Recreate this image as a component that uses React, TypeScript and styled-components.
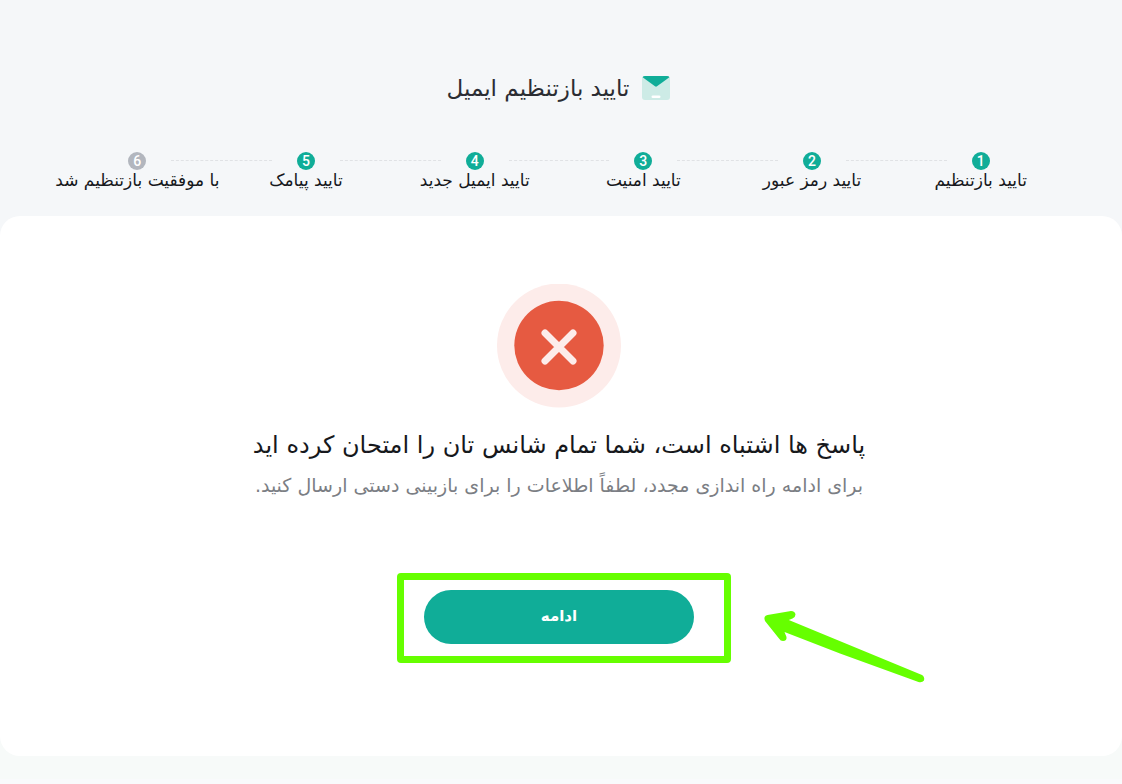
import React from "react";
import styled, { createGlobalStyle } from "styled-components";

const GlobalStyle = createGlobalStyle`
  * { box-sizing: border-box; }
  body {
    margin: 0;
    background: #f5f7f9;
    color: #16181c;
    font-family: "DejaVu Sans", sans-serif;
  }
`;

const Page = styled.main`
  display: flex;
  flex-direction: column;
  min-height: 100vh;
  overflow-x: hidden;
  border-bottom: 5px solid #f9fafc;
  background: linear-gradient(#f5f7f9 40%, #f7faf9 90%);
`;

const Header = styled.header`
  display: flex;
  align-items: center;
  justify-content: center;
  gap: 12px;
  padding: 68px 4px 0 0;
`;

const Title = styled.h1`
  margin: 0;
  font-size: 23px;
  line-height: 40px;
  font-weight: 400;
  color: #2b2d33;
`;

const Steps = styled.ol`
  display: grid;
  grid-template-columns: repeat(6, minmax(0, 1fr));
  margin: 0;
  padding: 44px 57px 26px 53px;
  list-style: none;
`;

const Step = styled.li`
  position: relative;
  display: flex;
  flex-direction: column;
  align-items: center;

  &:not(:last-child)::after {
    content: "";
    position: absolute;
    top: 8px;
    left: calc(-50% + 34px);
    right: calc(50% + 34px);
    border-top: 1px dashed #e0e2e5;
  }
`;

const StepNumber = styled.span<{ $done: boolean }>`
  display: flex;
  align-items: center;
  justify-content: center;
  width: 18px;
  height: 18px;
  border-radius: 50%;
  background: ${(p) => (p.$done ? "#10ad98" : "#b2b6be")};
  color: #fff;
  font: 500 14px/18px Roboto, sans-serif;
`;

const StepLabel = styled.span`
  height: 20px;
  font-size: 17px;
  line-height: 20px;
  white-space: nowrap;
`;

const Card = styled.section`
  display: flex;
  flex-direction: column;
  align-items: center;
  padding: 68px 4px 112px 0;
  margin-bottom: 23px;
  border-radius: 20px;
  background: #fff;
  text-align: center;
`;

const Heading = styled.h2`
  margin: 20px 0 0;
  font-size: 24px;
  line-height: 34px;
  font-weight: 400;
`;

const Message = styled.p`
  margin: 8px 0 0;
  font-size: 19px;
  line-height: 30px;
  color: #7b7e84;
`;

const ActionArea = styled.div`
  position: relative;
  margin-top: 90px;
`;

const ContinueButton = styled.button`
  display: block;
  width: 270px;
  height: 54px;
  padding: 0 0 2px;
  border: 0;
  border-radius: 27px;
  background: #10ad98;
  color: #fff;
  font: 700 15px/52px "DejaVu Sans", sans-serif;
  cursor: pointer;
`;

const Highlight = styled.div`
  position: absolute;
  inset: -17px -37px -19px -27px;
  border: 7px solid #66ff00;
  border-radius: 4px;
  pointer-events: none;
`;

const Arrow = styled.svg`
  position: absolute;
  top: 17px;
  left: 336px;
  pointer-events: none;
`;

const steps = [
  "تایید بازتنظیم",
  "تایید رمز عبور",
  "تایید امنیت",
  "تایید ایمیل جدید",
  "تایید پیامک",
  "با موفقیت بازتنظیم شد",
];

const MailIcon = () => (
  <svg width="30" height="26" viewBox="0 0 30 26" aria-hidden="true">
    <rect x="1" y="1" width="28" height="24" rx="3" fill="#cdebe6" />
    <path d="M1.600 2.200Q2.200 1 4 1H26Q27.800 1 28.400 2.200L16 11.300Q15 12 14 11.300Z" fill="#10ad98" />
    <rect x="10.500" y="20.400" width="9" height="2.600" rx="1.300" fill="#fff" />
  </svg>
);

const ErrorIcon = () => (
  <svg width="124" height="124" viewBox="0 0 124 124" aria-hidden="true">
    <circle cx="62" cy="61.500" r="62" fill="#fdecea" />
    <circle cx="62" cy="61.500" r="44.700" fill="#e65a41" />
    <path d="M48 49L76 77M76 49L48 77" stroke="#fdecea" strokeWidth="7" strokeLinecap="round" />
  </svg>
);

export default function App() {
  return (
    <Page dir="rtl" lang="fa">
      <GlobalStyle />
      <Header>
        <MailIcon />
        <Title>تایید بازتنظیم ایمیل</Title>
      </Header>
      <Steps>
        {steps.map((label, i) => (
          <Step key={label}>
            <StepNumber $done={i < 5}>{i + 1}</StepNumber>
            <StepLabel>{label}</StepLabel>
          </Step>
        ))}
      </Steps>
      <Card>
        <ErrorIcon />
        <Heading>پاسخ ها اشتباه است، شما تمام شانس تان را امتحان کرده اید</Heading>
        <Message>برای ادامه راه اندازی مجدد، لطفاً اطلاعات را برای بازبینی دستی ارسال کنید.</Message>
        <ActionArea>
          <ContinueButton type="button">ادامه</ContinueButton>
          <Highlight />
          <Arrow width="170" height="84" viewBox="0 0 170 84" aria-hidden="true">
            <path
              d="M7.500 8L31 4Q35 4 35.500 7.500Q35.500 10 32.500 11.500L28.800 13L162 68Q165 70 164 73.500Q162 76 158.500 75L80 46.500L24.500 25L26.500 30Q27 34 23 34Q20.500 34 19 31.500L5 14Q3 9 7.500 8Z"
              fill="#66ff00"
            />
          </Arrow>
        </ActionArea>
      </Card>
    </Page>
  );
}
